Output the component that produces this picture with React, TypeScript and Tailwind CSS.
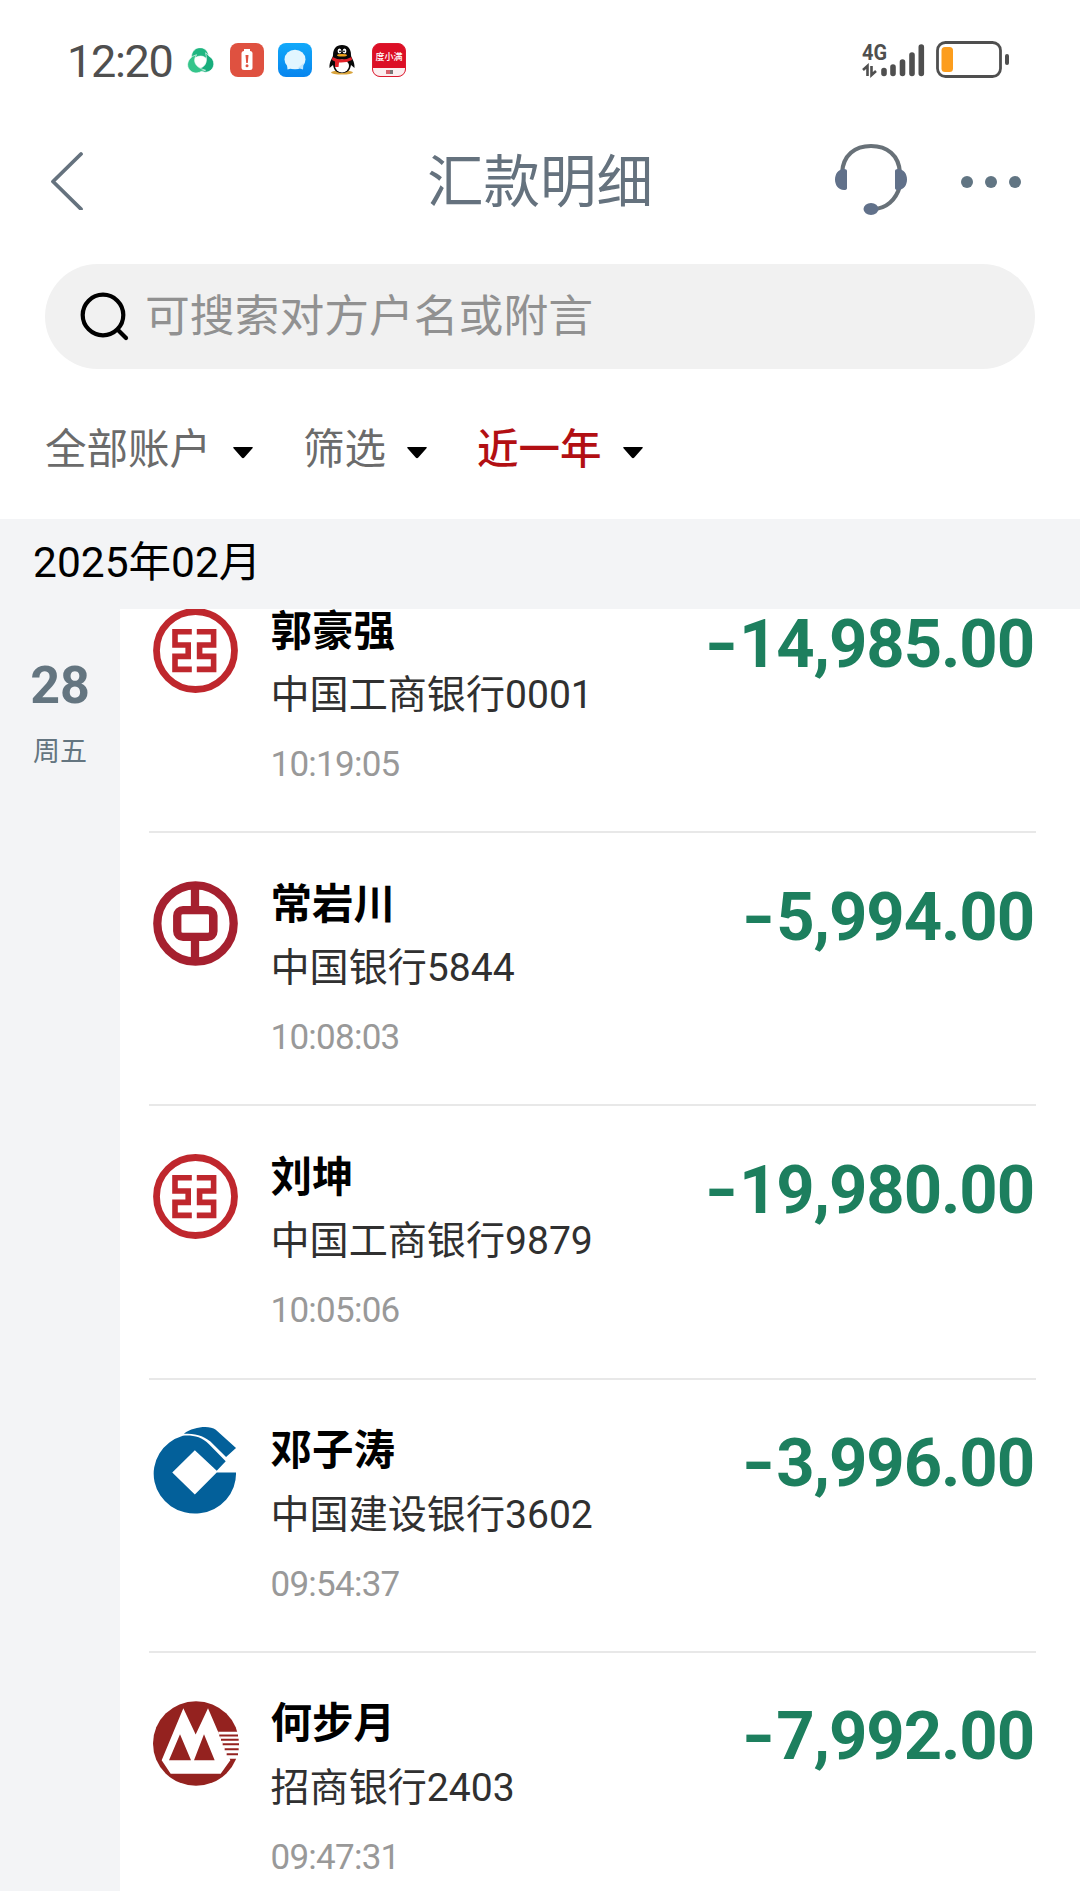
import React from 'react';

interface Transfer {
    name: string;
    bank: string;
    time: string;
    amount: string;
    Logo: () => React.JSX.Element;
}

const IcbcLogo = () => (
    <svg viewBox="0 0 85 85" className="h-[85px] w-[85px]" fill="none" stroke="#bf272d">
        <circle cx="42.5" cy="42.5" r="39" strokeWidth="6.8" />
        <g strokeWidth="5.6">
            <path d="M38.8 23.8H22V37H35.2V48.4H22V61.4H38.8" />
            <path d="M43.8 23.8H60.6V37H46.6V48.4H60.6V61.4H43.8" />
        </g>
    </svg>
);

const BocLogo = () => (
    <svg viewBox="66 62 256 256" className="h-[85px] w-[85px]" fill="none" stroke="#a5202f">
        <circle cx="194" cy="190" r="115" strokeWidth="25" />
        <rect x="139.5" y="150" width="108" height="80" rx="17" strokeWidth="26" />
        <path d="M192.5 75V140M192.5 240V305" strokeWidth="25" />
        <path d="M152 163H234V217H152Z" fill="#fff" stroke="none" />
    </svg>
);

const CcbLogo = () => (
    <svg viewBox="70 50 256 262" className="-mt-[1px] h-[87px] w-[85px]" fill="#03609a">
        <path d="M320 187H262L196 253L128 187L196 120L262 182L289 153L238 101C216 79 191 74 160 76A124 120 0 1 0 320 187Z" />
        <path d="M163 70C192 49 239 44 259 58L320 113L290 140L243 94C220 74 196 70 163 70Z" />
    </svg>
);

const CmbLogo = () => (
    <svg viewBox="69 63 258 254" className="h-[85px] w-[86px]" fill="#94221f">
        <ellipse cx="198" cy="190" rx="129" ry="127" />
        <path d="M160 84L197 163L234 84L301 240L272 281H122L95 240Z" fill="#fff" />
        <path d="M264 155H330V236H297Z" fill="#fff" />
        <path d="M150 162L183 240H117ZM222 162L254 240H192Z" />
        <path
            d="M268 166H324M273 179H326M278 192.500H327M284 207H326M290 222H324"
            fill="none"
            stroke="#94221f"
            strokeWidth="6"
        />
    </svg>
);

const transfers: Transfer[] = [
    { name: '郭豪强', bank: '中国工商银行0001', time: '10:19:05', amount: '14,985.00', Logo: IcbcLogo },
    { name: '常岩川', bank: '中国银行5844', time: '10:08:03', amount: '5,994.00', Logo: BocLogo },
    { name: '刘坤', bank: '中国工商银行9879', time: '10:05:06', amount: '19,980.00', Logo: IcbcLogo },
    { name: '邓子涛', bank: '中国建设银行3602', time: '09:54:37', amount: '3,996.00', Logo: CcbLogo },
    { name: '何步月', bank: '招商银行2403', time: '09:47:31', amount: '7,992.00', Logo: CmbLogo },
];

function StatusBar() {
    return (
        <div className="flex h-[120px] items-center justify-between pl-[67px] pr-[70px]">
            <div className="flex items-center">
                <span className="w-[120px] pt-[3px] font-['Roboto',sans-serif] text-[45px] leading-[60px] tracking-[-1.3px] text-[#4f4f4f]">
                    12:20
                </span>
                <svg viewBox="1 1 24 24" className="mt-[2px] h-[27px] w-[27px]" stroke="#fff" strokeWidth="0.5">
                    <path d="M5 9C5 -1 19 -3 20.500 9L20 13C17 7 11 6 4 13Z" fill="#1fb681" />
                    <path
                        d="M5 9C5 -1 19 -3 20.500 9L20 13C17 7 11 6 4 13Z"
                        fill="#18ad7c"
                        transform="rotate(120 13 13)"
                    />
                    <path
                        d="M5 9C5 -1 19 -3 20.500 9L20 13C17 7 11 6 4 13Z"
                        fill="#35c58b"
                        transform="rotate(240 13 13)"
                    />
                </svg>
                <svg viewBox="0 0 34 34" className="ml-[16px] h-[34px] w-[34px]">
                    <rect width="34" height="34" rx="8" fill="#df5140" />
                    <path d="M14 6H20V9H14Z" fill="#fff" />
                    <rect x="11.500" y="8" width="11" height="19" rx="2.500" fill="#fff" />
                    <path d="M15.500 12H18.500L17.800 20H16.200Z" fill="#df5140" />
                    <circle cx="17" cy="22.700" r="1.500" fill="#df5140" />
                </svg>
                <svg viewBox="0 0 34 34" className="ml-[14px] h-[34px] w-[34px]">
                    <defs>
                        <linearGradient id="msg" x1="0" y1="0" x2="0" y2="1">
                            <stop offset="0" stopColor="#12a9fa" />
                            <stop offset="1" stopColor="#0785ee" />
                        </linearGradient>
                    </defs>
                    <rect width="34" height="34" rx="8" fill="url(#msg)" />
                    <ellipse cx="17" cy="16.500" rx="10.500" ry="9.800" fill="#e2f6ff" />
                    <path d="M9 21L9.500 26.500L15 25Z" fill="#e2f6ff" />
                    <path d="M20 25L25 26.500L25.500 20Z" fill="#bfe6fd" />
                </svg>
                <svg viewBox="0 0 28 32" className="ml-[16px] h-[32px] w-[28px]">
                    <ellipse cx="14" cy="28.500" rx="11" ry="2" fill="#d9a43c" />
                    <path d="M14 1C8 1 5 5 5 11C5 14 1 17 1.500 24L5 21C6 27 9 29 14 29S22 27 23 21L26.500 24C27 17 23 14 23 11C23 5 20 1 14 1Z" fill="#080808" />
                    <ellipse cx="14" cy="22" rx="7" ry="6.500" fill="#fff" />
                    <ellipse cx="11.500" cy="7" rx="1.900" ry="2.600" fill="#fff" />
                    <ellipse cx="16.500" cy="7" rx="1.900" ry="2.600" fill="#fff" />
                    <circle cx="12" cy="7.300" r="0.900" />
                    <circle cx="16" cy="7.300" r="0.900" />
                    <ellipse cx="14" cy="11.300" rx="5" ry="1.300" fill="#f0a41c" />
                    <path d="M4.500 13Q14 18 23.500 13L24 16Q18 19 11 18.500L10.500 23H7V17.500L4 16Z" fill="#e3222a" />
                </svg>
                <div className="ml-[16px] h-[34px] w-[34px] overflow-hidden rounded-[8px] border border-[#dc1a2e] bg-[#dc0f26] text-center">
                    <div className="h-[24px] whitespace-nowrap text-[9px] font-medium leading-[26px] text-white">度小满</div>
                    <div className="flex h-[8px] justify-center bg-[#fbeff0] pt-[2px]">
                        <div className="h-[4px] w-[4px] bg-[#d8606a]"></div>
                        <div className="h-[4px] w-[3px] bg-[#777]"></div>
                    </div>
                </div>
            </div>
            <div className="flex items-center">
                <svg viewBox="0 -10 64 56" className="h-[56px] w-[64px]" stroke="#4f4f4f" fill="none">
                    <text
                        x="0"
                        y="17.500"
                        fontSize="22"
                        fontWeight="700"
                        fontFamily="Roboto, sans-serif"
                        fill="#4f4f4f"
                        stroke="none"
                        textLength="25"
                        lengthAdjust="spacingAndGlyphs"
                    >
                        4G
                    </text>
                    <g strokeWidth="2.600">
                        <path d="M1 28L5.500 24V34M9.500 24V33L14 29" />
                    </g>
                    <g strokeWidth="5.600" strokeLinecap="round">
                        <path d="M22 28.500V31.500M31 25V31.500M40.500 20V31.500M50 13V31.500M59.300 5V31.500" />
                    </g>
                </svg>
                <svg viewBox="0 0 74 38" className="ml-[10px] h-[38px] w-[74px]">
                    <rect x="1.500" y="1.500" width="63" height="34" rx="8" fill="none" stroke="#4f4f4f" strokeWidth="2.800" />
                    <rect x="5.500" y="6" width="11.500" height="25" rx="3.500" fill="#fc9d1d" />
                    <rect x="69" y="13" width="4" height="11" rx="2" fill="#4f4f4f" />
                </svg>
            </div>
        </div>
    );
}

function Header() {
    return (
        <div className="grid h-[122px] grid-cols-[1fr_auto_1fr] items-center pl-[49px] pr-[59px] text-[#65727e]">
            <svg viewBox="0 0 36 60" className="-mt-[2px] h-[60px] w-[36px]" fill="none" stroke="currentColor" strokeWidth="3.800">
                <path d="M32 4L4 31.500L32 59" strokeLinecap="round" strokeLinejoin="round" />
            </svg>
            <h1 className="-mt-[9px] pl-[10px] text-[56.500px] leading-[80px]">汇款明细</h1>
            <div className="flex items-center justify-end">
                <svg viewBox="0 0 74 74" className="-mt-[4px] h-[74px] w-[74px]" fill="#61718a">
                    <path d="M8 31C9 13 21 4 37 4S65 13 66 31M66 44C62 58 52 67 39 67" fill="none" stroke="#687178" strokeWidth="4.200" />
                    <path d="M10 27C-2 27-2 48 10 48Q13 48 13 46V29Q13 27 10 27ZM64 27C76 27 76 48 64 48Q61 48 61 46V29Q61 27 64 27Z" />
                    <ellipse cx="37" cy="67" rx="7.500" ry="6" />
                </svg>
                <div className="ml-[53px] mt-[1px] flex gap-[12px]">
                    <i className="h-[12px] w-[12px] rounded-full bg-[#617583]"></i>
                    <i className="h-[12px] w-[12px] rounded-full bg-[#617583]"></i>
                    <i className="h-[12px] w-[12px] rounded-full bg-[#617583]"></i>
                </div>
            </div>
        </div>
    );
}

const Caret = () => (
    <svg viewBox="0 0 22 13" className="mt-[14px] h-[13px] w-[22px]">
        <path d="M2 1H20Q21.500 1 20.500 2.300L12.300 11.500Q11 13 9.700 11.500L1.500 2.300Q0.500 1 2 1Z" />
    </svg>
);

function TransferRow({ item }: { item: Transfer }) {
    const { name, bank, time, amount, Logo } = item;
    return (
        <div className="ml-[29px] mr-[44px] flex h-[273.200px] shrink-0 border-b-2 border-[#e8e8e8] pl-[3.500px] pt-[48.500px]">
            <div className="-mt-[0.500px] w-[86px]">
                <Logo />
            </div>
            <div className="ml-[32px] flex-1 whitespace-nowrap font-['Roboto','Noto_Sans_CJK_SC',sans-serif]">
                <div className="-mt-[2px] font-['Noto_Sans_CJK_SC',sans-serif] text-[41.500px] font-bold leading-[42px] text-black">
                    {name}
                </div>
                <div className="mt-[18.500px] text-[39.100px] leading-[56px] text-[#303030]">{bank}</div>
                <div className="mt-[17px] text-[35px] leading-[50px] tracking-[-0.750px] text-[#999]">{time}</div>
            </div>
            <div className="mr-[2px] mt-[5px] flex font-['Roboto',sans-serif] text-[67px] font-bold leading-[60px] tracking-[-1.100px] text-[#1d7f5e]">
                <span className="mr-[2px] inline-block origin-right scale-x-[1.3]">-</span>
                <span>{amount}</span>
            </div>
        </div>
    );
}

export default function App() {
    return (
        <div className="flex h-[1891px] w-[1080px] flex-col overflow-hidden bg-white font-['Noto_Sans_CJK_SC',sans-serif]">
            <StatusBar />
            <Header />

            {/* 搜索框 */}
            <div className="ml-[45px] mr-[45px] mt-[22px] flex h-[105px] shrink-0 items-center rounded-full bg-[#f1f1f1] pl-[35px]">
                <svg viewBox="0 0 50 50" className="-mt-[2px] h-[50px] w-[50px]" fill="none" stroke="#000" strokeWidth="4.200">
                    <circle cx="23" cy="24" r="20.300" />
                    <path d="M38 39L46 47" strokeLinecap="round" />
                </svg>
                <span className="-mt-[7px] ml-[15px] text-[44.800px] leading-[60px] text-[#919191]">可搜索对方户名或附言</span>
            </div>

            {/* 筛选条件 */}
            <div className="flex h-[150px] shrink-0 items-center pl-[45px] pt-[3px] text-[41.500px] leading-[60px] text-[#6b6b6b]">
                <span className="mr-[21px]">全部账户</span>
                <Caret />
                <span className="ml-[49px] mr-[20px]">筛选</span>
                <Caret />
                <span className="ml-[49px] mr-[20px] font-medium text-[#b20f13]">近一年</span>
                <Caret />
            </div>

            <div className="h-[90px] shrink-0 bg-[#f3f4f6] pl-[33px] font-['Roboto','Noto_Sans_CJK_SC',sans-serif] text-[42.500px] leading-[88px] text-black">
                2025年02月
            </div>

            <div className="flex min-h-0 flex-1">
                <div className="w-[120px] bg-[#f3f4f6] text-center text-[#647580]">
                    <div className="mt-[39px] font-['Roboto',sans-serif] text-[52px] font-bold leading-[76px]">28</div>
                    <div className="mt-[6px] text-[27px] leading-[40px]">周五</div>
                </div>
                <div className="flex flex-1 flex-col overflow-hidden">
                    <div className="-mt-[49px] flex flex-col">
                        {transfers.map((item) => (
                            <TransferRow key={item.time} item={item} />
                        ))}
                    </div>
                </div>
            </div>
        </div>
    );
}
